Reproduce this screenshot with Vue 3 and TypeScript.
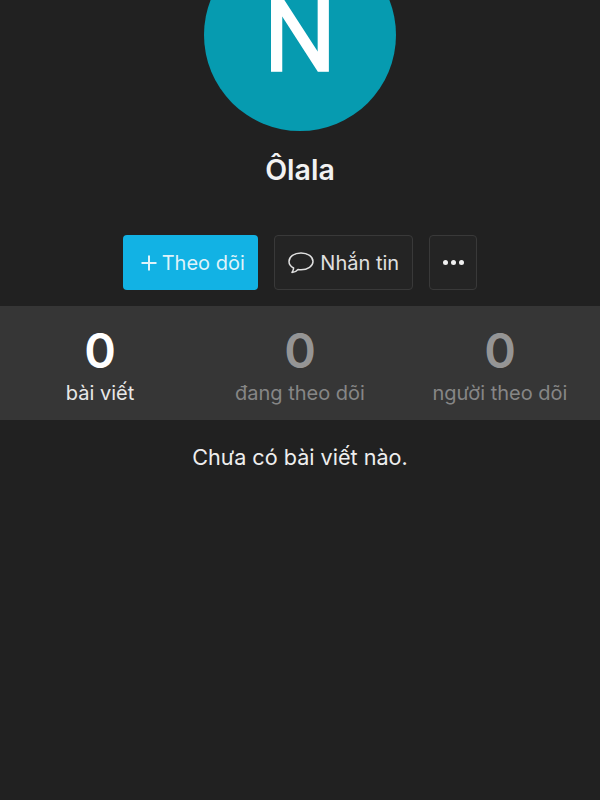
<script setup lang="ts">
interface Stat {
  count: number;
  label: string;
  active: boolean;
}

const stats: Stat[] = [
  { count: 0, label: "bài viết", active: true },
  { count: 0, label: "đang theo dõi", active: false },
  { count: 0, label: "người theo dõi", active: false },
];
</script>

<template>
  <div class="page">
    <div class="avatar">N</div>
    <div class="name">Ôlala</div>

    <div class="actions">
      <button class="btn follow">
        <svg width="18" height="18" viewBox="0 0 18 18" fill="none" stroke="currentColor" stroke-width="2">
          <path d="M9 1.500v15M1.500 9h15" />
        </svg>
        <span>Theo dõi</span>
      </button>
      <button class="btn message">
        <svg width="26" height="24" viewBox="1 0 26 24" fill="none" stroke="currentColor" stroke-width="1.500" stroke-linejoin="round">
          <path d="M14 2C7.200 2 2 5.700 2 10.400c0 2.800 1.800 5.100 4.600 6.600 0 1.600-.7 3.200-1.600 4.400 2.400-.2 4.600-1.300 6-3 1 .2 2 .3 3 .3 6.800 0 12-3.700 12-8.300S20.800 2 14 2z" />
        </svg>
        <span>Nhắn tin</span>
      </button>
      <button class="btn more" aria-label="more">
        <i></i><i></i><i></i>
      </button>
    </div>

    <div class="stats">
      <div v-for="stat in stats" :key="stat.label" class="stat" :class="{ active: stat.active }">
        <div class="count">{{ stat.count }}</div>
        <div class="label">{{ stat.label }}</div>
      </div>
    </div>

    <p class="empty">Chưa có bài viết nào.</p>
  </div>
</template>

<style scoped>
.page {
  width: 600px;
  height: 800px;
  overflow: hidden;
  background: #212121;
  color: #fff;
  font-family: Inter, Roboto, "Liberation Sans", sans-serif;
  display: flex;
  flex-direction: column;
  align-items: center;
}
.avatar {
  flex: none;
  width: 192px;
  height: 192px;
  margin-top: -61px;
  border-radius: 50%;
  background: #069bb0;
  display: flex;
  align-items: center;
  justify-content: center;
  font-family: Roboto, sans-serif;
  font-size: 103px;
  -webkit-text-stroke: 1.500px #fff;
  line-height: 1;
}
.name {
  margin-top: 23px;
  font-size: 28.500px;
  line-height: 32px;
  font-weight: 600;
  color: #f2f2f2;
}
.actions {
  margin-top: 49px;
  display: flex;
}
.btn {
  height: 55px;
  box-sizing: border-box;
  border-radius: 4px;
  font-family: inherit;
  font-size: 20px;
  display: flex;
  align-items: center;
  justify-content: center;
  padding: 0;
}
.follow {
  width: 135px;
  gap: 4px;
  padding-left: 4px;
  border: none;
  background: #12b2e4;
  color: #dff3fa;
}
.message {
  width: 139px;
  margin-left: 16.500px;
  gap: 6px;
  border: 1px solid #393939;
  background: #242424;
  color: #e0e0e0;
}
.more {
  width: 48px;
  margin-left: 16px;
  gap: 3px;
  border: 1px solid #393939;
  background: #242424;
}
.more i {
  width: 5px;
  height: 5px;
  border-radius: 50%;
  background: #f0f0f0;
}
.stats {
  align-self: stretch;
  margin-top: 16px;
  height: 114px;
  background: #363636;
  display: grid;
  grid-template-columns: repeat(3, 1fr);
}
.stat {
  display: flex;
  flex-direction: column;
  align-items: center;
  padding-top: 18px;
  color: #868686;
}
.stat.active {
  color: #e8e8e8;
}
.count {
  font-size: 48px;
  line-height: 54px;
  font-weight: 600;
  color: #959595;
}
.stat.active .count {
  color: #fff;
}
.label {
  margin-top: 1px;
  font-size: 20px;
  line-height: 28px;
}
.empty {
  margin: 22px 0 0;
  font-size: 21.600px;
  line-height: 30px;
  color: #eeeeee;
}
</style>
